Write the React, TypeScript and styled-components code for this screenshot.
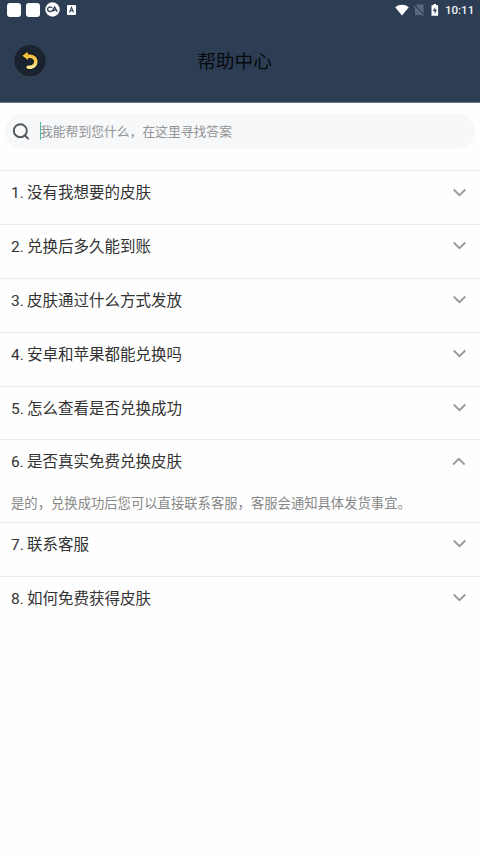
import React, { useState } from "react";
import styled, { createGlobalStyle } from "styled-components";

const Global = createGlobalStyle`
  * { box-sizing: border-box; }
  body {
    margin: 0;
    background: #fefefe;
    font-family: Roboto, "Noto Sans CJK SC", sans-serif;
  }
`;

const Page = styled.main`
  width: 100%;
  background: #fefefe;
`;

const Top = styled.header`
  height: 103px;
  background: #2d3e54;
  border-bottom: 1px solid #657286;
`;

const StatusBar = styled.div`
  height: 19px;
  padding: 0 7px;
  display: flex;
  align-items: center;
  justify-content: space-between;
`;

const StatusGroup = styled.div`
  display: flex;
  align-items: center;
`;

const AppSquare = styled.span`
  width: 14px;
  height: 14px;
  margin-right: 5px;
  border-radius: 3px;
  background: #fff;
`;

const Clock = styled.span`
  margin-left: 5px;
  width: 28px;
  padding-top: 1px;
  color: #f2f4f6;
  font-size: 11.5px;
  font-weight: 500;
  line-height: 18px;
  white-space: nowrap;
`;

const TitleBar = styled.div`
  height: 83px;
  padding: 0 13px;
  display: grid;
  grid-template-columns: 34px 1fr 34px;
  align-items: center;
`;

const BackButton = styled.button`
  width: 34px;
  height: 34px;
  padding: 0;
  border: 0;
  background: none;
  display: block;
`;

const Title = styled.h1`
  margin: 3px 0 0 -11px;
  text-align: center;
  font-size: 18.67px;
  font-weight: 400;
  line-height: 28px;
  color: #07090d;
`;

const Search = styled.label`
  height: 35px;
  margin: 11px 5px 21px;
  padding-left: 7px;
  border-radius: 18px;
  background: #f6f8fa;
  display: flex;
  align-items: center;
`;

const Caret = styled.span`
  width: 1px;
  height: 18px;
  margin: -1px -1px 0 10px;
  background: #55bfae;
`;

const Placeholder = styled.span`
  font-size: 12.8px;
  line-height: 20px;
  color: #939495;
`;

const Item = styled.section<{ $open: boolean }>`
  height: ${(p) => (p.$open ? 82.5 : 53.9)}px;
  border-top: 1px solid #ececec;
  padding: 0 13px 0 11px;
`;

const Question = styled.button`
  width: 100%;
  height: 43px;
  padding: 0;
  border: 0;
  background: none;
  display: flex;
  align-items: center;
  justify-content: space-between;
  font: inherit;
  font-size: 15.5px;
  text-align: left;
  color: #333;
`;

const QuestionText = styled.span`
  padding-bottom: 3px;
  word-spacing: -0.7px;
`;

const Answer = styled.p`
  margin: 10px 0 0;
  font-size: 13.33px;
  line-height: 21px;
  color: #888;
  white-space: nowrap;
`;

const questions = [
  "没有我想要的皮肤",
  "兑换后多久能到账",
  "皮肤通过什么方式发放",
  "安卓和苹果都能兑换吗",
  "怎么查看是否兑换成功",
  "是否真实免费兑换皮肤",
  "联系客服",
  "如何免费获得皮肤",
];

const answer = "是的，兑换成功后您可以直接联系客服，客服会通知具体发货事宜。";

const BackIcon = () => (
  <svg width="34" height="34" viewBox="0 0 34 34">
    <defs>
      <linearGradient id="gold" x1="0" y1="0" x2="0" y2="1">
        <stop offset="0" stopColor="#efbb35" />
        <stop offset="0.5" stopColor="#f5c74c" />
        <stop offset="1" stopColor="#fff0ae" />
      </linearGradient>
    </defs>
    <circle cx="17" cy="17.500" r="16.200" fill="#3c4650" />
    <circle cx="17" cy="16.800" r="15.800" fill="#1a2431" />
    <path
      d="M9.300 11.700 14.600 7.800 15 10.300C20.800 10.100 24.600 13 24.600 17.500c0 4.600-3.500 7.600-8.200 7.600-1.300 0-2.900-.3-3-1.700-.1-1.200.8-1.800 2.400-1.800 3.200 0 5.200-1.500 5.200-4 0-2.400-2.100-3.900-5.900-3.600l.2 2.200Z"
      fill="url(#gold)"
      stroke="#0c1014"
      strokeWidth="1.600"
      strokeLinejoin="round"
      paintOrder="stroke"
    />
  </svg>
);

const SearchIcon = () => (
  <svg width="18" height="18" viewBox="0 0 18 18" fill="none" stroke="#55585b" strokeWidth="1.900" strokeLinecap="round">
    <circle cx="8.300" cy="7.700" r="6.500" />
    <path d="m12.900 12.500 3.300 3.100" />
  </svg>
);

const Chevron = ({ open }: { open: boolean }) => (
  <svg width="15" height="10" viewBox="0 0 15 10" fill="none" stroke="#999" strokeWidth="1.800">
    <path d={open ? "M1 7.500 6.800 1.800 12.600 7.500" : "M1.700 1.500 7.500 7.200 13.300 1.500"} />
  </svg>
);

const RoundAppIcon = () => (
  <svg width="15" height="15" viewBox="0 0 15 15">
    <circle cx="7.500" cy="7.500" r="7.200" fill="#fff" />
    <path
      d="M7.200 5.700C5.800 4.600 2.600 4.900 2.600 7.300c0 2.700 3.800 2.900 5.100.8l2-3 2.600 4.600M7.400 8.900c1.800-.1 3-.8 3.600-2"
      fill="none"
      stroke="#2d3e54"
      strokeWidth="1.300"
    />
  </svg>
);

const LetterAppIcon = () => (
  <svg width="9" height="10" viewBox="0 0 9 10">
    <rect width="9" height="10" rx="1" fill="#fff" />
    <path d="m2.500 7.400 2-5 2 5M3.200 5.800h2.600" fill="none" stroke="#2d3e54" strokeWidth="1.100" />
  </svg>
);

const DeviceIcons = () => (
  <svg width="46" height="14" viewBox="0 0 46 14">
    <path d="M1.200 4.200C5.200 .9 10.800.9 14.800 4.200L8 12.500Z" fill="#fff" />
    <path d="M21 3.800 23.500 1.500h6v10.500H21Z" fill="#5b687b" />
    <path d="m20 2.200 10.200 10.500" stroke="#2d3e54" strokeWidth="2" />
    <path d="m19.700 2.900 9.600 10" stroke="#7c8797" strokeWidth="1" />
    <path d="M37.500 2.200h2V1h2.600v1.200h2v10.600h-6.600Z" fill="#fff" />
    <path d="m41.300 4-2.500 4h1.800v3l2.400-4.200h-1.700Z" fill="#2d3e54" />
  </svg>
);

const IconGap = styled.span<{ $width: number }>`
  width: ${(p) => p.$width}px;
`;

export default function App() {
  const [openIndex, setOpenIndex] = useState(5);

  return (
    <Page>
      <Global />
      <Top>
        <StatusBar>
          <StatusGroup>
            <AppSquare />
            <AppSquare />
            <RoundAppIcon />
            <IconGap $width={7} />
            <LetterAppIcon />
          </StatusGroup>
          <StatusGroup>
            <DeviceIcons />
            <Clock>10:11</Clock>
          </StatusGroup>
        </StatusBar>
        <TitleBar>
          <BackButton aria-label="返回">
            <BackIcon />
          </BackButton>
          <Title>帮助中心</Title>
        </TitleBar>
      </Top>
      <Search>
        <SearchIcon />
        <Caret />
        <Placeholder>我能帮到您什么，在这里寻找答案</Placeholder>
      </Search>
      {questions.map((text, i) => (
        <Item key={text} $open={i === openIndex}>
          <Question onClick={() => setOpenIndex(i === openIndex ? -1 : i)}>
            <QuestionText>{`${i + 1}. ${text}`}</QuestionText>
            <Chevron open={i === openIndex} />
          </Question>
          {i === openIndex && <Answer>{answer}</Answer>}
        </Item>
      ))}
    </Page>
  );
}
